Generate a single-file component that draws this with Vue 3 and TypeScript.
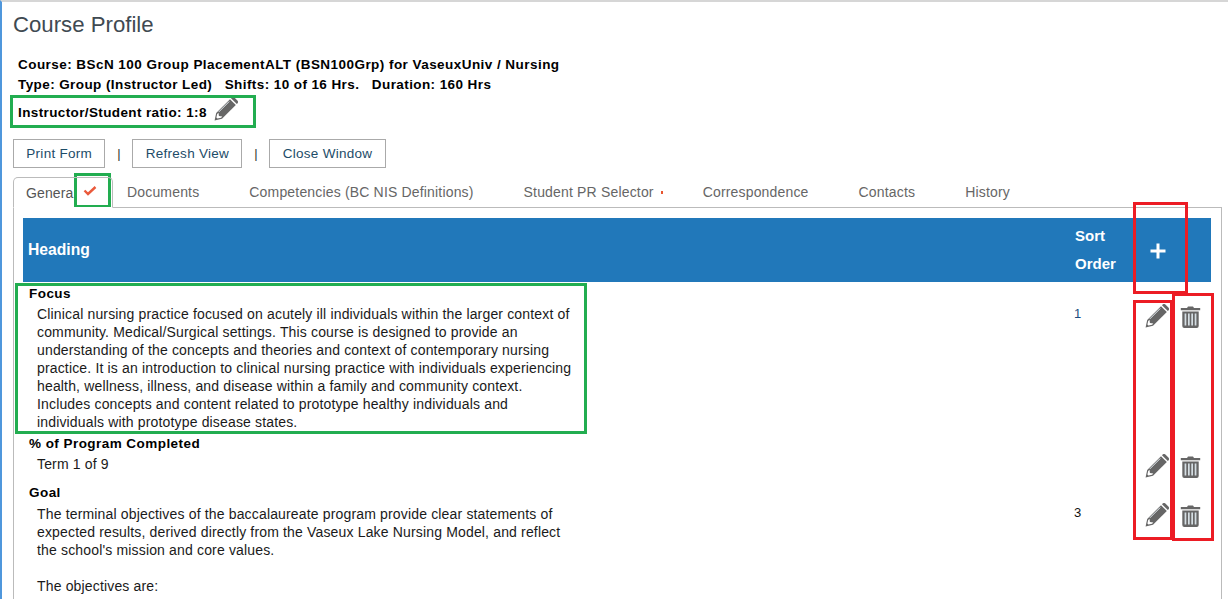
<script setup lang="ts">
interface Row { heading: string; lines: string[]; sort: string; height: number; bodyTop: number }
const tabs = ['Documents', 'Competencies (BC NIS Definitions)', 'Student PR Selector', 'Correspondence', 'Contacts', 'History']
const rows: Row[] = [
  { heading: 'Focus', sort: '1', height: 150, bodyTop: 2, lines: [
    'Clinical nursing practice focused on acutely ill individuals within the larger context of',
    'community. Medical/Surgical settings. This course is designed to provide an',
    'understanding of the concepts and theories and context of contemporary nursing',
    'practice. It is an introduction to clinical nursing practice with individuals experiencing',
    'health, wellness, illness, and disease within a family and community context.',
    'Includes concepts and content related to prototype healthy individuals and',
    'individuals with prototype disease states.' ] },
  { heading: '% of Program Completed', sort: '', height: 49, bodyTop: 2, lines: ['Term 1 of 9'] },
  { heading: 'Goal', sort: '3', height: 120, bodyTop: 3, lines: [
    'The terminal objectives of the baccalaureate program provide clear statements of',
    'expected results, derived directly from the Vaseux Lake Nursing Model, and reflect',
    "the school's mission and core values.",
    '\u00a0',
    'The objectives are:' ] },
]
</script>

<template>
  <div class="page">
    <h1 class="title">Course Profile</h1>
    <div class="info">
      <div>Course: BScN 100 Group PlacementALT (BSN100Grp) for VaseuxUniv / Nursing</div>
      <div class="type">Type: Group (Instructor Led) &nbsp; Shifts: 10 of 16 Hrs. &nbsp; Duration: 160 Hrs</div>
      <div class="ratio">
        <span>Instructor/Student ratio: 1:8</span>
        <svg class="icon" viewBox="0 0 24 24"><use href="#pencil" /></svg>
      </div>
    </div>

    <div class="actions">
      <button class="btn">Print Form</button><span class="sep">|</span>
      <button class="btn">Refresh View</button><span class="sep">|</span>
      <button class="btn">Close Window</button>
    </div>

    <div class="tabs">
      <div class="tab active">Genera<svg class="check" viewBox="0 0 14 12"><path d="M1.5 5.5 5 9 12.5 2" fill="none" stroke="#ea5a3c" stroke-width="2.4" /></svg></div>
      <div v-for="t in tabs" :key="t" class="tab">
        {{ t }}<i v-if="t === 'Student PR Selector'" class="dot"></i>
      </div>
    </div>

    <div class="panel">
      <div class="thead">
        <div class="th-main">Heading</div>
        <div class="th-sort">Sort<br />Order</div>
        <div class="th-add">
          <svg viewBox="0 0 18 18" class="plus"><path d="M9 1.5v15M1.5 9h15" stroke="#fff" stroke-width="3" /></svg>
        </div>
      </div>
      <div v-for="r in rows" :key="r.heading" class="row" :style="{ height: r.height + 'px' }">
        <div class="cell">
          <div class="heading">{{ r.heading }}</div>
          <div class="body" :style="{ paddingTop: r.bodyTop + 'px' }">
            <div v-for="(l, i) in r.lines" :key="i">{{ l }}</div>
          </div>
        </div>
        <div class="sort" :class="{ blue: r.sort === '1' }">{{ r.sort }}</div>
        <div class="row-icons">
          <svg class="icon" viewBox="0 0 24 24"><use href="#pencil" /></svg>
          <svg class="trash" viewBox="0 0 21 22"><use href="#trash" /></svg>
        </div>
      </div>
    </div>

    <i class="mark green m1"></i>
    <i class="mark green m2"></i>
    <i class="mark green m3"></i>
    <i class="mark red m4"></i>
    <i class="mark red m5"></i>
    <i class="mark red m6"></i>

    <svg class="defs" aria-hidden="true">
      <symbol id="pencil" viewBox="0 0 24 24">
        <path fill="#666" d="M.6 23.4 2.2 16 16 2.2 21.8 8 8 21.8Z" />
        <path fill="#666" d="M17 1.2 17.6.6a2 2 0 0 1 2.8 0l3 3a2 2 0 0 1 0 2.8l-.6.6Z" />
        <path fill="#fff" d="M2.4 20.6 3.2 16.9 4.5 15.7 4.9 19 8.3 19.5 7.1 20.8 3.4 21.6Z" />
        <path fill="none" stroke="#e3ebf0" stroke-width="1" d="M4.8 14.9 15.2 4.5" />
      </symbol>
      <symbol id="trash" viewBox="0 0 21 22">
        <path fill="#666" d="M7 2 8 .5h5L14 2h6.2v2.2H.8V2Z" />
        <path fill="#666" d="M2.3 5.5h16.4V20a2 2 0 0 1-2 2H4.3a2 2 0 0 1-2-2Z" />
        <path fill="#d5dee3" d="M4.6 7.5h1.7v12H4.6zM8 7.5h1.7v12H8zM11.3 7.5H13v12h-1.7zM14.7 7.5h1.7v12h-1.7z" />
      </symbol>
    </svg>
  </div>
</template>

<style>
html, body { margin: 0; background: #fff; }
</style>

<style scoped>
.page {
  position: relative;
  box-sizing: border-box;
  width: 1228px;
  height: 599px;
  overflow: hidden;
  padding: 13px 5px 0 11px;
  border-top: 2px solid #d6d6d6;
  border-left: 2px solid #4f97dc;
  background: #fff;
  font-family: "Liberation Sans", Arial, sans-serif;
  color: #000;
}
.title {
  margin: 0;
  font-size: 22.2px;
  font-weight: 400;
  line-height: 20px;
  color: #3f4a52;
}
.info {
  margin: 20px 0 0 5px;
  font-size: 13.5px;
  font-weight: 700;
  letter-spacing: .45px;
  line-height: 20px;
}
.type { letter-spacing: .41px; }
.ratio {
  display: flex;
  align-items: center;
  gap: 7px;
  height: 35px;
  letter-spacing: .38px;
}
.ratio .icon { margin-top: -7px; }
.icon { width: 24px; height: 24px; flex: none; display: block; }
.trash { width: 21px; height: 22px; flex: none; display: block; margin-top: 2px; }
.actions { display: flex; align-items: center; margin-top: 9px; }
.btn {
  box-sizing: border-box;
  height: 29px;
  padding: 0 12.3px;
  border: 1px solid #aaa;
  background: #fff;
  font: 13.5px "Liberation Sans", Arial, sans-serif;
  letter-spacing: .28px;
  color: #1d4c68;
}
.sep { width: 27px; text-align: center; font-size: 13px; color: #333; }
.tabs { display: flex; height: 30px; margin-top: 9px; }
.tab {
  display: flex;
  align-items: center;
  box-sizing: border-box;
  height: 30px;
  font-size: 14px;
  letter-spacing: .17px;
  color: #666;
  white-space: nowrap;
  margin-right: 50px;
}
.tab.active {
  width: 100px;
  padding: 0 0 0 12px;
  margin-right: 14px;
  margin-bottom: -1px;
  height: 31px;
  border: 1px solid #bbb;
  border-bottom: 1px solid #fff;
  border-radius: 5px 5px 0 0;
  letter-spacing: .13px;
  color: #555;
  position: relative;
  z-index: 1;
}
.check { width: 14px; height: 12px; margin-left: 10px; margin-top: -3px; }
.dot { display: inline-block; width: 2px; height: 3px; margin: 0 -10px 0 7px; background: #e8552f; }
.panel {
  box-sizing: border-box;
  width: 1209px;
  height: 420px;
  padding: 10px 10px 0 9px;
  border: 1px solid #bbb;
  border-bottom: 0;
}
.thead {
  display: flex;
  align-items: center;
  height: 64px;
  background: #2178ba;
  color: #fff;
  font-weight: 700;
  font-size: 15.7px;
}
.th-main { flex: 1; padding-left: 5px; }
.th-sort { width: 74px; font-size: 15px; line-height: 28px; margin-top: -1px; }
.th-add { width: 62px; display: flex; }
.plus { width: 18px; height: 18px; display: block; margin-top: 1px; }
.row {
  display: flex;
  font-size: 14px;
  line-height: 18px;
}
.cell { flex: 1; padding: 3px 0 0 6px; overflow: hidden; }
.heading { font-size: 13.5px; font-weight: 700; letter-spacing: .45px; line-height: 18px; }
.body { padding-left: 8px; color: #1a1a1a; white-space: nowrap; letter-spacing: .16px; }
.sort { width: 71px; padding-top: 23px; font-size: 13px; color: #111; box-sizing: border-box; }
.sort.blue { color: #1d4c80; }
.row-icons {
  display: flex;
  align-items: flex-start;
  gap: 11px;
  width: 66px;
  box-sizing: border-box;
  padding-top: 22px;
}
.mark { position: absolute; box-sizing: border-box; border: 3px solid; pointer-events: none; }
.green { border-color: #22ad50; }
.red { border-color: #ec1c24; }
.m1 { left: 8px; top: 93px; width: 246px; height: 33px; }
.m2 { left: 72px; top: 171px; width: 37px; height: 35px; }
.m3 { left: 13px; top: 281px; width: 572px; height: 151px; }
.m4 { left: 1131px; top: 200px; width: 55px; height: 92px; }
.m5 { left: 1131px; top: 298px; width: 40px; height: 240px; }
.m6 { left: 1170px; top: 291px; width: 42px; height: 248px; }
.defs { position: absolute; width: 0; height: 0; }
</style>
